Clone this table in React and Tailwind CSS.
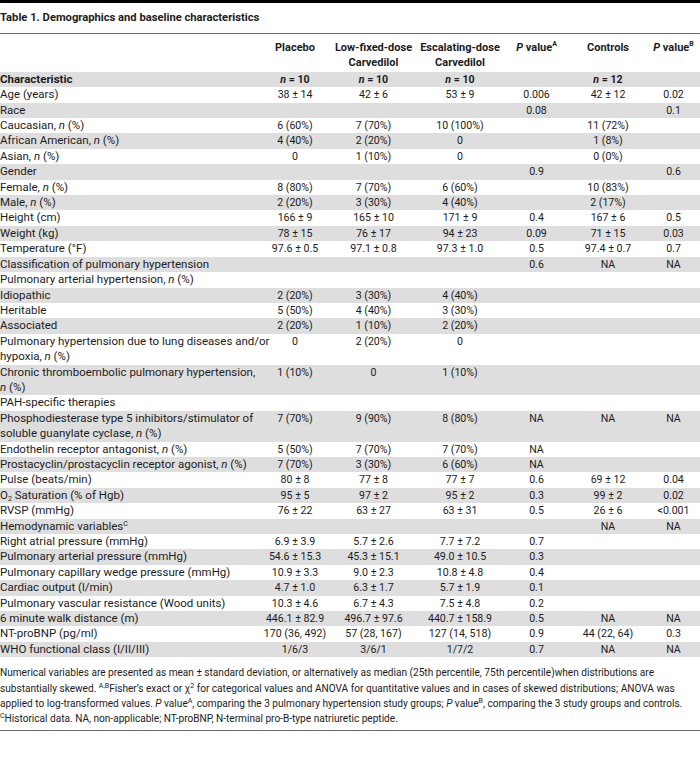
import React from 'react';

const n = <i>n</i>;
const np = <>, <i>n</i> (%)</>;

// label, placebo, low-fixed, escalating, p value A, controls, p value B
const rows = [
  [<b>Characteristic</b>, <b><i>n</i> = 10</b>, <b><i>n</i> = 10</b>, <b><i>n</i> = 10</b>, '', <b><i>n</i> = 12</b>, ''],
  ['Age (years)', '38 ± 14', '42 ± 6', '53 ± 9', '0.006', '42 ± 12', '0.02'],
  ['Race', '', '', '', '0.08', '', '0.1'],
  [<>Caucasian{np}</>, '6 (60%)', '7 (70%)', '10 (100%)', '', '11 (72%)', ''],
  [<>African American{np}</>, '4 (40%)', '2 (20%)', '0', '', '1 (8%)', ''],
  [<>Asian{np}</>, '0', '1 (10%)', '0', '', '0 (0%)', ''],
  ['Gender', '', '', '', '0.9', '', '0.6'],
  [<>Female{np}</>, '8 (80%)', '7 (70%)', '6 (60%)', '', '10 (83%)', ''],
  [<>Male{np}</>, '2 (20%)', '3 (30%)', '4 (40%)', '', '2 (17%)', ''],
  ['Height (cm)', '166 ± 9', '165 ± 10', '171 ± 9', '0.4', '167 ± 6', '0.5'],
  ['Weight (kg)', '78 ± 15', '76 ± 17', '94 ± 23', '0.09', '71 ± 15', '0.03'],
  ['Temperature (°F)', '97.6 ± 0.5', '97.1 ± 0.8', '97.3 ± 1.0', '0.5', '97.4 ± 0.7', '0.7'],
  ['Classification of pulmonary hypertension', '', '', '', '0.6', 'NA', 'NA'],
  [<>Pulmonary arterial hypertension, {n} (%)</>, '', '', '', '', '', ''],
  ['Idiopathic', '2 (20%)', '3 (30%)', '4 (40%)', '', '', ''],
  ['Heritable', '5 (50%)', '4 (40%)', '3 (30%)', '', '', ''],
  ['Associated', '2 (20%)', '1 (10%)', '2 (20%)', '', '', ''],
  [<>Pulmonary hypertension due to lung diseases and/or<br />hypoxia{np}</>, '0', '2 (20%)', '0', '', '', ''],
  [<>Chronic thromboembolic pulmonary hypertension,<br />{n} (%)</>, '1 (10%)', '0', '1 (10%)', '', '', ''],
  ['PAH-specific therapies', '', '', '', '', '', ''],
  [<>Phosphodiesterase type 5 inhibitors/stimulator of<br />soluble guanylate cyclase{np}</>, '7 (70%)', '9 (90%)', '8 (80%)', 'NA', 'NA', 'NA'],
  [<>Endothelin receptor antagonist{np}</>, '5 (50%)', '7 (70%)', '7 (70%)', 'NA', '', ''],
  [<>Prostacyclin/prostacyclin receptor agonist{np}</>, '7 (70%)', '3 (30%)', '6 (60%)', 'NA', '', ''],
  ['Pulse (beats/min)', '80 ± 8', '77 ± 8', '77 ± 7', '0.6', '69 ± 12', '0.04'],
  [<>O<sub className="text-[7px] leading-none">2</sub> Saturation (% of Hgb)</>, '95 ± 5', '97 ± 2', '95 ± 2', '0.3', '99 ± 2', '0.02'],
  ['RVSP (mmHg)', '76 ± 22', '63 ± 27', '63 ± 31', '0.5', '26 ± 6', '<0.001'],
  [<>Hemodynamic variables<sup className="text-[7px] leading-none">C</sup></>, '', '', '', '', 'NA', 'NA'],
  ['Right atrial pressure (mmHg)', '6.9 ± 3.9', '5.7 ± 2.6', '7.7 ± 7.2', '0.7', '', ''],
  ['Pulmonary arterial pressure (mmHg)', '54.6 ± 15.3', '45.3 ± 15.1', '49.0 ± 10.5', '0.3', '', ''],
  ['Pulmonary capillary wedge pressure (mmHg)', '10.9 ± 3.3', '9.0 ± 2.3', '10.8 ± 4.8', '0.4', '', ''],
  ['Cardiac output (l/min)', '4.7 ± 1.0', '6.3 ± 1.7', '5.7 ± 1.9', '0.1', '', ''],
  ['Pulmonary vascular resistance (Wood units)', '10.3 ± 4.6', '6.7 ± 4.3', '7.5 ± 4.8', '0.2', '', ''],
  ['6 minute walk distance (m)', '446.1 ± 82.9', '496.7 ± 97.6', '440.7 ± 158.9', '0.5', 'NA', 'NA'],
  ['NT-proBNP (pg/ml)', '170 (36, 492)', '57 (28, 167)', '127 (14, 518)', '0.9', '44 (22, 64)', '0.3'],
  ['WHO functional class (I/II/III)', '1/6/3', '3/6/1', '1/7/2', '0.7', 'NA', 'NA'],
];

const cols = 'grid grid-cols-[259px_72px_85px_88px_65px_78px_53px]';
const sup = 'text-[7px] align-super leading-none';

export default function App() {
  return (
    <div
      className="w-[700px] bg-white text-[#1c1c1c] text-[11.5px] leading-[15.4px]"
      style={{ fontFamily: 'Roboto, "Open Sans", sans-serif' }}
    >
      <div className="border-t-[3px] border-black" />
      <div className="h-[30px] flex items-center text-[11.2px] font-bold">
        Table 1. Demographics and baseline characteristics
      </div>
      <div className="border-t border-[#6b6b6b]" />

      {/* column headers */}
      <div className={`${cols} pt-[6px] pb-[1px] text-[11px] font-bold text-center`}>
        <div />
        <div>Placebo</div>
        <div>Low-fixed-dose<br />Carvedilol</div>
        <div>Escalating-dose<br />Carvedilol</div>
        <div><i>P</i> value<span className={sup}>A</span></div>
        <div>Controls</div>
        <div><i>P</i> value<span className={sup}>B</span></div>
      </div>

      {rows.map((r, i) => (
        <div key={i} className={`${cols} ${i % 2 === 0 ? 'bg-[#dedede]' : 'bg-white'}`}>
          <div className="text-left whitespace-nowrap">{r[0]}</div>
          {r.slice(1).map((c, j) => (
            <div key={j} className="text-center whitespace-nowrap text-[10.6px]">{c}</div>
          ))}
        </div>
      ))}

      <div className="pt-[8px] pb-[3px] text-[10.1px] whitespace-nowrap">
        <p>
          Numerical variables are presented as mean ± standard deviation, or alternatively as median (25th
          percentile, 75th percentile)when distributions are
          <br />
          substantially skewed. <span className={sup}>A,B</span>Fisher’s exact or χ<span className={sup}>2</span> for
          categorical values and ANOVA for quantitative values and in cases of skewed distributions; ANOVA was
          <br />
          applied to log-transformed values. <i>P</i> value<span className={sup}>A</span>, comparing the 3 pulmonary
          hypertension study groups; <i>P</i> value<span className={sup}>B</span>, comparing the 3 study groups and
          controls.
          <br />
          <span className={sup}>C</span>Historical data. NA, non-applicable; NT-proBNP, N-terminal pro-B-type
          natriuretic peptide.
        </p>
      </div>
      <div className="border-t border-[#6b6b6b]" />
    </div>
  );
}
